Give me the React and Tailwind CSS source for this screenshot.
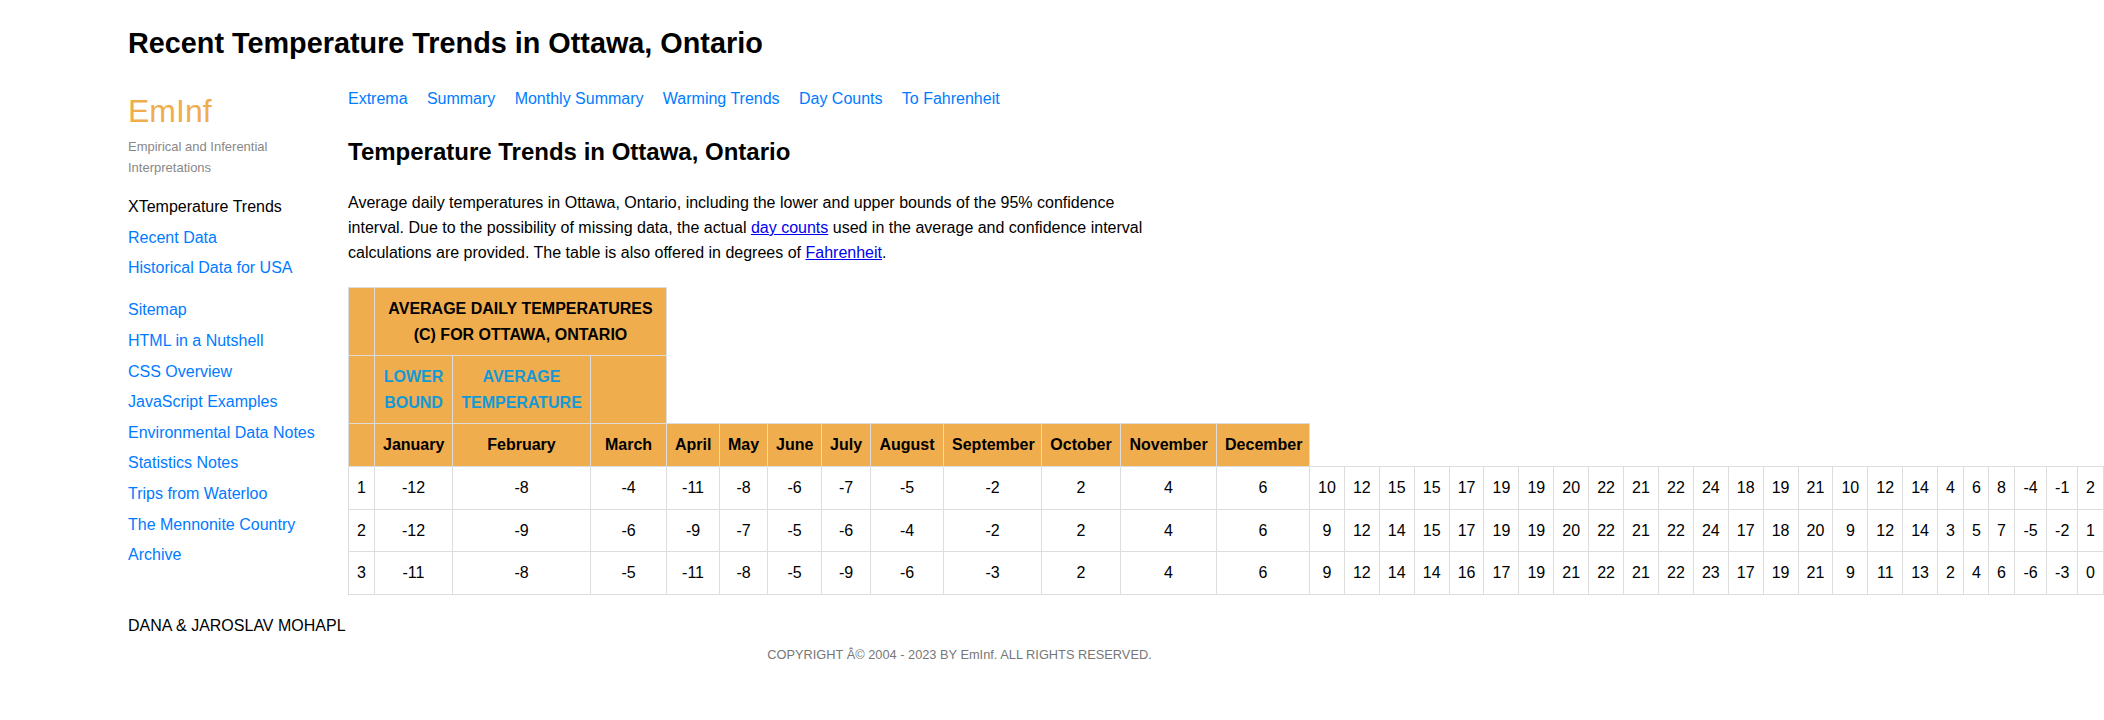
const months = [
  "January",
  "February",
  "March",
  "April",
  "May",
  "June",
  "July",
  "August",
  "September",
  "October",
  "November",
  "December",
];

// column widths, row-number column first, then months, then the extra day columns
const colWidths = [
  "w-[26px]", "w-[78px]", "w-[138px]", "w-[76px]", "w-[53px]", "w-[48px]", "w-[54px]",
  "w-[49px]", "w-[73px]", "w-[98px]", "w-[79px]", "w-[96px]", "w-[93px]",
  "w-[34.9px]", "w-[34.9px]", "w-[34.9px]", "w-[34.9px]", "w-[34.9px]", "w-[34.9px]",
  "w-[34.9px]", "w-[34.9px]", "w-[34.9px]", "w-[34.9px]", "w-[34.9px]", "w-[34.9px]",
  "w-[34.9px]", "w-[34.9px]", "w-[34.9px]", "w-[34.9px]", "w-[34.9px]", "w-[34.9px]",
  "w-[26px]", "w-[25px]", "w-[26px]", "w-[32px]", "w-[31px]", "w-[26px]",
];

const rows = [
  [-12, -8, -4, -11, -8, -6, -7, -5, -2, 2, 4, 6, 10, 12, 15, 15, 17, 19, 19, 20, 22, 21, 22, 24, 18, 19, 21, 10, 12, 14, 4, 6, 8, -4, -1, 2],
  [-12, -9, -6, -9, -7, -5, -6, -4, -2, 2, 4, 6, 9, 12, 14, 15, 17, 19, 19, 20, 22, 21, 22, 24, 17, 18, 20, 9, 12, 14, 3, 5, 7, -5, -2, 1],
  [-11, -8, -5, -11, -8, -5, -9, -6, -3, 2, 4, 6, 9, 12, 14, 14, 16, 17, 19, 21, 22, 21, 22, 23, 17, 19, 21, 9, 11, 13, 2, 4, 6, -6, -3, 0],
];

const navLinks = ["Extrema", "Summary", "Monthly Summary", "Warming Trends", "Day Counts", "To Fahrenheit"];

const sideLinks = [
  "HTML in a Nutshell",
  "CSS Overview",
  "JavaScript Examples",
  "Environmental Data Notes",
  "Statistics Notes",
  "Trips from Waterloo",
  "The Mennonite Country",
  "Archive",
];

const cell = "border border-[#ddd] px-2 py-2";
const head = "border border-[#ddd] px-2 py-2 bg-[#f0ad4e] font-bold text-center";

const App = () => {
  return (
    <div className="w-full min-h-[720px] overflow-hidden bg-white text-black font-['Liberation_Sans',Arial,sans-serif]">
      <h1 className="pl-[128px] pt-[26px] text-[28.8px] leading-[34px] font-bold">
        Recent Temperature Trends in Ottawa, Ontario
      </h1>

      <div className="flex">
        {/* sidebar */}
        <div className="w-[220px] shrink-0 pl-[128px] pt-[32.5px] box-content">
          <div className="text-[32px] leading-[36.8px] text-[#f0ad4e]">EmInf</div>
          <p className="mt-[6.4px] text-[13px] leading-[21.5px] text-[#888]">
            Empirical and Inferential
            <br />
            Interpretations
          </p>
          <ul className="mt-[13.5px] text-[16px] leading-[30.6px]">
            <li>XTemperature Trends</li>
            <li className="text-[#007bff]">Recent Data</li>
            <li className="text-[#007bff]">Historical Data for USA</li>
            <li className="mt-[11.4px] text-[#007bff]">Sitemap</li>
            {sideLinks.map((l) => (
              <li key={l} className="text-[#007bff] whitespace-nowrap">
                {l}
              </li>
            ))}
          </ul>
        </div>

        {/* main */}
        <div className="flex-1 min-w-0 pt-[26px]">
          <nav className="flex gap-[19.3px] text-[16px] leading-[25px] text-[#007bff]">
            {navLinks.map((n) => (
              <a key={n}>{n}</a>
            ))}
          </nav>

          <h2 className="mt-[26.5px] text-[24px] leading-[28px] font-bold">
            Temperature Trends in Ottawa, Ontario
          </h2>

          <p className="mt-[24.5px] w-[810px] text-[16px] leading-[25px]">
            Average daily temperatures in Ottawa, Ontario, including the lower and upper bounds of the 95% confidence
            interval. Due to the possibility of missing data, the actual{" "}
            <a className="text-[#0000ee] underline">day counts</a> used in the average and confidence interval
            calculations are provided. The table is also offered in degrees of{" "}
            <a className="text-[#0000ee] underline">Fahrenheit</a>.
          </p>

          <table className="mt-[22px] table-fixed border-collapse w-[1755px] text-[16px] leading-[25.6px]">
            <colgroup>
              {colWidths.map((w, i) => (
                <col key={i} className={w} />
              ))}
            </colgroup>
            <thead>
              <tr>
                <th className={head}></th>
                <th colSpan={3} className={head}>
                  AVERAGE DAILY TEMPERATURES (C) FOR OTTAWA, ONTARIO
                </th>
              </tr>
              <tr>
                <th className={head}></th>
                <th className={`${head} text-[#139ad6]`}>LOWER BOUND</th>
                <th className={`${head} text-[#139ad6]`}>AVERAGE TEMPERATURE</th>
                <th className={head}></th>
              </tr>
              <tr>
                <th className={head}></th>
                {months.map((m) => (
                  <th key={m} className={head}>
                    {m}
                  </th>
                ))}
              </tr>
            </thead>
            <tbody>
              {rows.map((r, i) => (
                <tr key={i}>
                  <td className={cell}>{i + 1}</td>
                  {r.map((v, j) => (
                    <td key={j} className={`${cell} text-center`}>
                      {v}
                    </td>
                  ))}
                </tr>
              ))}
            </tbody>
          </table>
        </div>
      </div>

      <div className="pl-[128px] mt-[18px] text-[16px] leading-[25.6px]">DANA &amp; JAROSLAV MOHAPL</div>
      <div className="w-[1919px] mt-[7px] text-center text-[12.8px] leading-[20px] text-[#777]">
        COPYRIGHT Â© 2004 - 2023 BY EmInf. ALL RIGHTS RESERVED.
      </div>
    </div>
  );
};

export default App;
